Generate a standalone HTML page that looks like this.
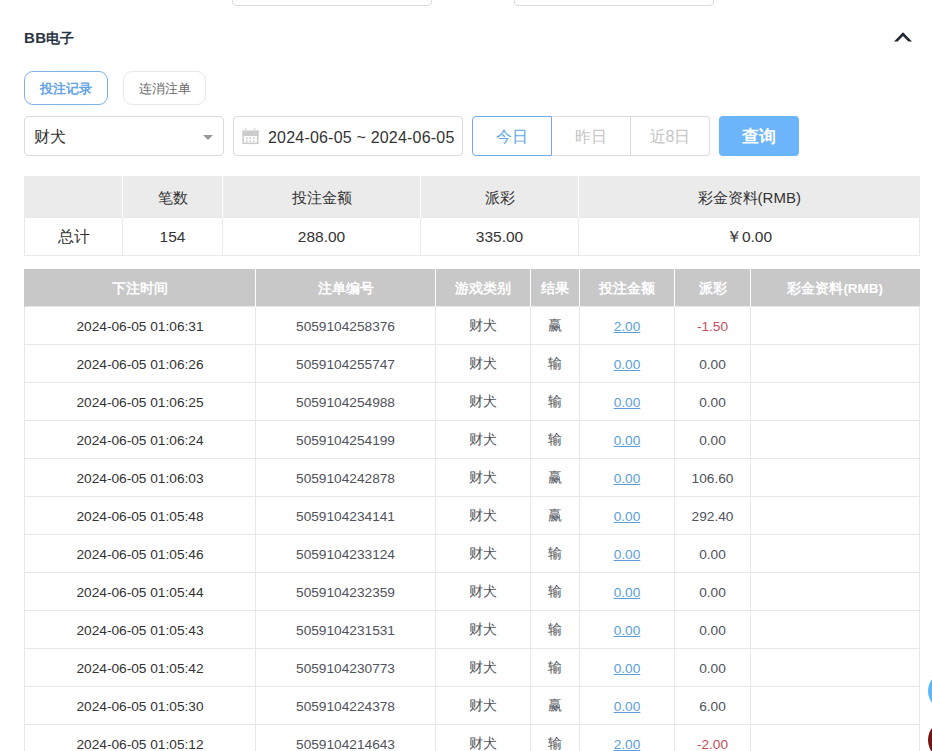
<!DOCTYPE html>
<html><head><meta charset="utf-8">
<style>
*{box-sizing:border-box;margin:0;padding:0}
html,body{width:932px;height:751px;overflow:hidden;background:#fff}
body{position:relative;font-family:"Liberation Sans",sans-serif;color:#333}
.abs{position:absolute}
.topbox{position:absolute;top:-35px;height:41px;width:200px;border:1px solid #dcdcdc;border-radius:4px}
.title{left:24px;top:30px;font-size:14.5px;letter-spacing:0.2px;font-weight:bold;color:#2a3444;line-height:16px}
.tab{position:absolute;top:71px;height:34px;border-radius:9px;font-size:13px;line-height:33px;text-align:center}
.tab1{left:24px;width:84px;border:1px solid #7db0e8;color:#62a4e6;font-weight:bold}
.tab2{left:123px;width:83px;border:1px solid #e9e9e9;color:#6a6a6a}
.inp{position:absolute;top:116px;height:40px;border:1px solid #dcdcdc;border-radius:4px}
.sel{left:24px;width:200px}
.sel .txt{position:absolute;left:9px;top:1px;line-height:38px;font-size:16px;color:#333}
.sel .arr{position:absolute;left:178px;top:18px;width:0;height:0;border-left:5px solid transparent;border-right:5px solid transparent;border-top:5px solid #999}
.date{left:233px;width:230px}
.date .txt{position:absolute;left:34px;top:1.5px;line-height:38px;font-size:16px;letter-spacing:0.2px;color:#333;white-space:nowrap}
.grp{position:absolute;top:116px;height:40px;font-size:16px;line-height:39px;text-align:center;color:#c4c4c4;border-top:1px solid #dcdcdc;border-bottom:1px solid #dcdcdc}
.g1{left:472px;width:80px;border:1px solid #74aae6;border-radius:4px 0 0 4px;color:#5ea5e8}
.g2{left:552px;width:79px;border-right:1px solid #dcdcdc}
.g3{left:631px;width:79px;border-right:1px solid #dcdcdc;border-radius:0 4px 4px 0}
.qry{position:absolute;left:719px;top:116px;width:80px;height:40px;background:#6cb5fa;border-radius:4px;color:#fff;font-weight:bold;font-size:16.5px;line-height:40px;text-align:center}
table{border-collapse:collapse;position:absolute;left:24px;table-layout:fixed}
.sum{top:176px;width:895px}
.sum th{background:#ebebeb;height:41px;padding-top:5px;font-weight:normal;font-size:15px;color:#333;border-left:1px solid #fff}
.sum th:first-child{border-left:1px solid #ebebeb}
.sum td{height:38px;padding-top:2px;text-align:center;font-size:15.5px;color:#333;border:1px solid #eaeaea}
.det{top:269px;width:895px}
.det th{background:#c8c8c8;height:37px;padding-top:3px;color:#fff;font-weight:bold;font-size:13.5px;border-left:1px solid #fff}
.det th:first-child{border-left:1px solid #c8c8c8}
.det td{height:38px;padding-top:2px;text-align:center;font-size:13.7px;color:#333;border:1px solid #e8e8e8}
.det td{color:#4f535b}.det td:first-child{color:#333}
.det td.lk{color:#5c9fdb;text-decoration:underline}
.det td.neg{color:#c64f5e}
</style></head><body>
<div class="topbox" style="left:232px"></div>
<div class="topbox" style="left:514px"></div>
<div class="abs title"><span style="font-size:15px;letter-spacing:0.4px">BB</span><span style="font-size:13.5px;letter-spacing:0">电子</span></div>
<svg class="abs" style="left:0;top:0" width="932" height="60"><polygon points="903,32.3 912,41.4 908.4,41.4 903,35.9 897.6,41.4 894,41.4" fill="#1e2631"/></svg>
<div class="tab tab1">投注记录</div>
<div class="tab tab2">连消注单</div>
<div class="inp sel"><span class="txt">财犬</span><span class="arr"></span></div>
<div class="inp date">
<svg class="abs" style="left:8px;top:11px" width="17" height="17" viewBox="0 0 17 17"><g fill="#cbcbcb"><rect x="0.5" y="2.5" width="16" height="5.5"/><rect x="0.5" y="2.5" width="1.6" height="13.5"/><rect x="14.9" y="2.5" width="1.6" height="13.5"/><rect x="0.5" y="14.5" width="16" height="1.6"/><rect x="2.8" y="0" width="1.6" height="3.5" fill="#dcdcdc"/><rect x="11.8" y="0" width="1.6" height="3.5" fill="#dcdcdc"/><rect x="4" y="9.5" width="1.6" height="1.6"/><rect x="7.5" y="9.5" width="1.6" height="1.6"/><rect x="11" y="9.5" width="1.6" height="1.6"/><rect x="4" y="12.3" width="1.6" height="1.6"/><rect x="7.5" y="12.3" width="1.6" height="1.6"/><rect x="11" y="12.3" width="1.6" height="1.6"/></g></svg>
<span class="txt">2024-06-05 ~ 2024-06-05</span></div>
<div class="grp g1">今日</div>
<div class="grp g2">昨日</div>
<div class="grp g3">近8日</div>
<div class="qry">查询</div>

<table class="sum">
<colgroup><col style="width:98px"><col style="width:100px"><col style="width:198px"><col style="width:158px"><col style="width:341px"></colgroup>
<tr><th></th><th>笔数</th><th>投注金额</th><th>派彩</th><th>彩金资料(RMB)</th></tr>
<tr><td>总计</td><td>154</td><td>288.00</td><td>335.00</td><td>￥0.00</td></tr>
</table>

<table class="det">
<colgroup><col style="width:231px"><col style="width:180px"><col style="width:95px"><col style="width:49px"><col style="width:95px"><col style="width:76px"><col style="width:169px"></colgroup>
<tr><th>下注时间</th><th>注单编号</th><th>游戏类别</th><th>结果</th><th>投注金额</th><th>派彩</th><th>彩金资料(RMB)</th></tr>
<tr><td>2024-06-05 01:06:31</td><td class="no">5059104258376</td><td class="no">财犬</td><td class="no">赢</td><td class="lk">2.00</td><td class="neg">-1.50</td><td></td></tr>
<tr><td>2024-06-05 01:06:26</td><td class="no">5059104255747</td><td class="no">财犬</td><td class="no">输</td><td class="lk">0.00</td><td>0.00</td><td></td></tr>
<tr><td>2024-06-05 01:06:25</td><td class="no">5059104254988</td><td class="no">财犬</td><td class="no">输</td><td class="lk">0.00</td><td>0.00</td><td></td></tr>
<tr><td>2024-06-05 01:06:24</td><td class="no">5059104254199</td><td class="no">财犬</td><td class="no">输</td><td class="lk">0.00</td><td>0.00</td><td></td></tr>
<tr><td>2024-06-05 01:06:03</td><td class="no">5059104242878</td><td class="no">财犬</td><td class="no">赢</td><td class="lk">0.00</td><td>106.60</td><td></td></tr>
<tr><td>2024-06-05 01:05:48</td><td class="no">5059104234141</td><td class="no">财犬</td><td class="no">赢</td><td class="lk">0.00</td><td>292.40</td><td></td></tr>
<tr><td>2024-06-05 01:05:46</td><td class="no">5059104233124</td><td class="no">财犬</td><td class="no">输</td><td class="lk">0.00</td><td>0.00</td><td></td></tr>
<tr><td>2024-06-05 01:05:44</td><td class="no">5059104232359</td><td class="no">财犬</td><td class="no">输</td><td class="lk">0.00</td><td>0.00</td><td></td></tr>
<tr><td>2024-06-05 01:05:43</td><td class="no">5059104231531</td><td class="no">财犬</td><td class="no">输</td><td class="lk">0.00</td><td>0.00</td><td></td></tr>
<tr><td>2024-06-05 01:05:42</td><td class="no">5059104230773</td><td class="no">财犬</td><td class="no">输</td><td class="lk">0.00</td><td>0.00</td><td></td></tr>
<tr><td>2024-06-05 01:05:30</td><td class="no">5059104224378</td><td class="no">财犬</td><td class="no">赢</td><td class="lk">0.00</td><td>6.00</td><td></td></tr>
<tr><td>2024-06-05 01:05:12</td><td class="no">5059104214643</td><td class="no">财犬</td><td class="no">输</td><td class="lk">2.00</td><td class="neg">-2.00</td><td></td></tr>
</table>

<div class="abs" style="left:928px;top:672px;width:38px;height:38px;border-radius:50%;background:#5cb5f6"></div>
<div class="abs" style="left:928px;top:720px;width:40px;height:40px;border-radius:50%;background:#761414"></div>
</body></html>
